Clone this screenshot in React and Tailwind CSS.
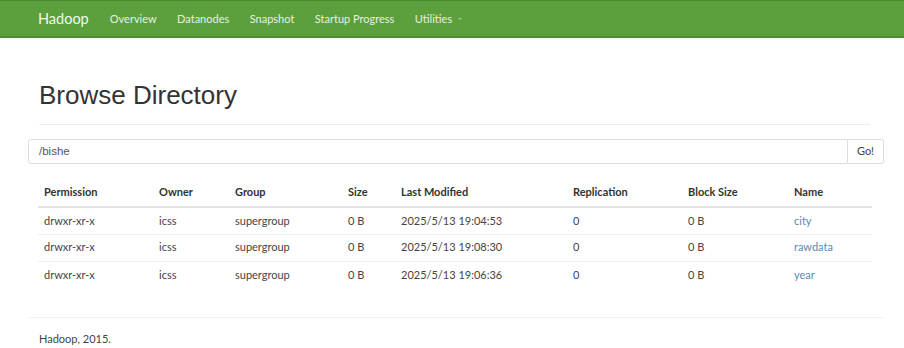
import React from 'react';

const NAV = ['Overview', 'Datanodes', 'Snapshot', 'Startup Progress'];

const COLS = [
  { label: 'Permission', w: 'w-[115px]' },
  { label: 'Owner', w: 'w-[76px]' },
  { label: 'Group', w: 'w-[113px]' },
  { label: 'Size', w: 'w-[53px]' },
  { label: 'Last Modified', w: 'w-[172px]' },
  { label: 'Replication', w: 'w-[115px]' },
  { label: 'Block Size', w: 'w-[106px]' },
  { label: 'Name', w: 'w-[84px]' },
];

const ROWS = [
  ['drwxr-xr-x', 'icss', 'supergroup', '0 B', '2025/5/13 19:04:53', '0', '0 B', 'city'],
  ['drwxr-xr-x', 'icss', 'supergroup', '0 B', '2025/5/13 19:08:30', '0', '0 B', 'rawdata'],
  ['drwxr-xr-x', 'icss', 'supergroup', '0 B', '2025/5/13 19:06:36', '0', '0 B', 'year'],
];

export default function App() {
  return (
    <div className="w-[904px] h-[348px] bg-white overflow-hidden font-['Lato','Open_Sans',sans-serif] text-[#333]">
      {/* Navbar */}
      <div className="h-[38px] bg-[#5ba03c] border-t border-[#4b8a2f] border-b-2 border-b-[#4e8f33] flex items-center pl-[38px] pt-[1px]">
        <span className="text-[14.5px] text-[#f4f7f2] mr-[21px]">Hadoop</span>
        <div className="flex items-center gap-[20.5px] text-[11px] text-[#e6f0e1]">
          {NAV.map((n) => (
            <span key={n}>{n}</span>
          ))}
          <span className="flex items-center gap-[6px]">
            Utilities
            <span className="w-0 h-0 border-l-[2.5px] border-r-[2.5px] border-t-[2.5px] border-l-transparent border-r-transparent border-t-[#9fc98a]" />
          </span>
        </div>
      </div>

      {/* Page header */}
      <div className="pl-[39px] pr-[34px] pt-[42px]">
        <h1 className="text-[26px] leading-[30px] font-['Liberation_Sans',Arial,sans-serif] text-[#333]">
          Browse Directory
        </h1>
        <div className="mt-[14px] border-t border-[#eee]" />
      </div>

      {/* Path input */}
      <div className="flex mt-[14px] ml-[28px] mr-[20px] h-[25px]">
        <div className="flex-1 border border-[#ddd] rounded-l-[3px] flex items-center pl-[10px] text-[11.5px] text-[#555] font-['Liberation_Sans',Arial,sans-serif]">
          /bishe
        </div>
        <div className="w-[36px] border border-l-0 border-[#ddd] rounded-r-[3px] flex items-center justify-center text-[11px] text-[#444]">
          Go!
        </div>
      </div>

      {/* Table */}
      <table className="mt-[15px] ml-[38px] table-fixed border-collapse text-[11px]">
        <thead>
          <tr className="h-[28px] border-b-2 border-[#e4e4e4]">
            {COLS.map((c) => (
              <th key={c.label} className={`${c.w} text-left font-bold pl-[6px] text-[#333]`}>
                {c.label}
              </th>
            ))}
          </tr>
        </thead>
        <tbody>
          {ROWS.map((r, i) => (
            <tr key={i} className={`h-[27px] ${i < ROWS.length - 1 ? 'border-b border-[#eee]' : ''}`}>
              {r.map((v, j) => (
                <td key={j} className={`pl-[6px] ${j === 7 ? 'text-[#5b87b5]' : 'text-[#444]'}`}>
                  {v}
                </td>
              ))}
            </tr>
          ))}
        </tbody>
      </table>

      {/* Footer */}
      <div className="mt-[29px] ml-[28px] mr-[20px] border-t border-[#f0f0f0]" />
      <div className="pl-[39px] pt-[13px] text-[11px] text-[#444]">Hadoop, 2015.</div>
    </div>
  );
}
